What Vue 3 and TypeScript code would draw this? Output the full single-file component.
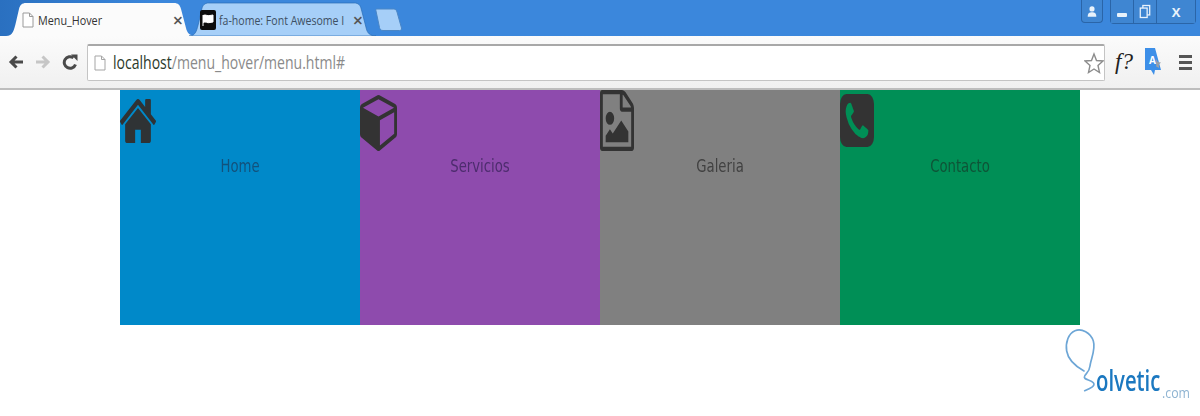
<script setup lang="ts">
interface MenuItem {
  label: string
  cls: string
  box: string
  path: string
}

const items: MenuItem[] = [
  {
    label: 'Home',
    cls: 'home',
    box: '90 253 1612 1283',
    path: 'M1472 992v480q0 26-19 45t-45 19h-384v-384h-256v384h-384q-26 0-45-19t-19-45v-480q0-1 .5-3t.5-3l575-474 575 474q1 2 1 6zm223-69l-62 74q-8 9-21 11h-3q-13 0-21-7l-692-577-692 577q-12 8-24 7-13-2-21-11l-62-74q-8-10-7-23.500t11-21.500l719-599q32-26 76-26t76 26l244 204v-195q0-14 9-23t23-9h192q14 0 23 9t9 23v408l219 182q10 8 11 21.500t-7 23.500z',
  },
  {
    label: 'Servicios',
    cls: 'servicios',
    box: '0 128 1664 1664',
    path: 'M896 1629l640-349v-636l-640 233v752zm-64-865l698-254-698-254-698 254zm832-252v768q0 35-18 65t-49 47l-704 384q-28 16-61 16t-61-16l-704-384q-31-17-49-47t-18-65v-768q0-40 23-73t61-47l704-256q22-8 44-8t44 8l704 256q38 14 61 47t23 73z',
  },
  {
    label: 'Galeria',
    cls: 'galeria',
    box: '128 0 1536 1792',
    path: 'M1596 380q28 28 48 76t20 88v1152q0 40-28 68t-68 28h-1344q-40 0-68-28t-28-68v-1600q0-40 28-68t68-28h896q40 0 88 20t76 48zm-444-244v376h376q-10-29-22-41l-313-313q-12-12-41-22zm384 1528v-1024h-416q-40 0-68-28t-28-68v-416h-768v1536h1280zm-128-448v320h-1024v-192l192-192 128 128 384-384zm-832-192q-80 0-136-56t-56-136 56-136 136-56 136 56 56 136-56 136-136 56z',
  },
  {
    label: 'Contacto',
    cls: 'contacto',
    box: '0 128 1536 1536',
    path: 'M1280 1193q0-11-2-16t-18-16.500-40.500-25-47.500-26.500-45.500-25-28.500-15q-5-3-19-13t-25-15-21-5q-15 0-36.500 20.500t-39.500 45-38.500 45-33.500 20.500q-7 0-16.500-3.500t-15.500-6.500-17-9.500-14-8.500q-99-55-170-126.500t-127-170.500q-2-3-8.500-14t-9.500-17-6.500-15.500-3.500-16.500q0-13 20.500-33.500t45-38.500 45-39.500 20.500-36.500q0-10-5-21t-15-25-13-19q-3-6-15-28.500t-25-45.500-26.500-47.500-25-40.500-16.500-18-16-2q-48 0-101 22-46 21-80 94.500t-34 130.500q0 16 2.500 34t5 30.500 9 33 10 29.500 12.500 33 11 30q60 164 216.500 320.500t320.500 216.500q6 2 30 11t33 12.500 29.500 10 33 9 30.500 5 34 2.500q57 0 130.500-34t94.500-80q22-53 22-101zm256-777v960q0 119-84.500 203.500t-203.500 84.500h-960q-119 0-203.500-84.500t-84.500-203.500v-960q0-119 84.500-203.500t203.500-84.500h960q119 0 203.500 84.500t84.500 203.500z',
  },
]
</script>

<template>
  <div class="page">
    <!-- Browser tab strip -->
    <header class="tabstrip">
      <div class="tab active">
        <svg class="tab-shape" viewBox="0 0 190 34" preserveAspectRatio="none">
          <path d="M0 34 C7 34 8 28 10 20 L13 7 C14 3 16 1 20 1 L168 1 C172 1 174 3 175 7 L180 26 C181 31 184 34 190 34 Z" fill="#fbfbfb" />
        </svg>
        <svg class="page-icon" viewBox="0 0 12 16">
          <path d="M1 1h6.500L11 4.500V15H1z M7.500 1v3.500H11" fill="#fff" stroke="#9a9a9a" stroke-width="1" />
        </svg>
        <span class="tab-title">Menu_Hover</span>
        <span class="tab-close">×</span>
      </div>
      <div class="tab inactive">
        <svg class="tab-shape" viewBox="0 0 190 34" preserveAspectRatio="none">
          <path d="M0 34 C7 34 8 28 10 20 L13 7 C14 3 16 1 20 1 L168 1 C172 1 174 3 175 7 L180 26 C181 31 184 34 190 34 Z" fill="#a6cff8" stroke="#2a6db5" stroke-width="0.7" />
        </svg>
        <span class="favicon">
          <svg viewBox="0 0 16 16">
            <path d="M3 3v11 M3 3.500c3-1.500 4 1 7 0l3-.500v7l-3 .500c-3 1-4-1.500-7 0" fill="#fff" stroke="#fff" stroke-width="1" />
          </svg>
        </span>
        <span class="tab-title muted">fa-home: Font Awesome I</span>
        <span class="tab-close">×</span>
      </div>
      <svg class="new-tab" viewBox="0 0 28 23">
        <path d="M1.500 1h17c2 0 3 1 3.500 3l4.500 16c.4 1.500-.5 2.500-2 2.500H8c-2 0-3-1-3.500-3L1 3c-.3-1 0-2 .5-2z" fill="#a6cff8" stroke="#4a86c6" />
      </svg>
      <div class="window-controls">
        <div class="win-btn user">
          <svg viewBox="0 0 14 14" width="12" height="13">
            <circle cx="7" cy="4" r="3" fill="#e8f2fb" />
            <path d="M2 13c0-4 2-5 5-5s5 1 5 5z" fill="#e8f2fb" />
          </svg>
        </div>
        <div class="win-group">
          <div class="win-btn min"><span class="min-bar"></span></div>
          <div class="win-btn restore">
            <svg viewBox="0 0 14 16" width="12" height="15">
              <rect x="4.500" y="1" width="8" height="11" fill="none" stroke="#e8f2fb" stroke-width="1.500" />
              <rect x="1.500" y="4" width="8" height="11" fill="#3f86d2" stroke="#e8f2fb" stroke-width="1.500" />
            </svg>
          </div>
          <div class="win-btn close">X</div>
        </div>
      </div>
    </header>

    <!-- Browser toolbar -->
    <nav class="toolbar">
      <svg class="nav-icon" viewBox="0 0 16 16">
        <path d="M15 8H3 M8.500 2.500L3 8l5.500 5.500" fill="none" stroke="#4a4a4a" stroke-width="3" />
      </svg>
      <svg class="nav-icon" viewBox="0 0 16 16">
        <path d="M1 8H13 M7.500 2.500L13 8l-5.500 5.500" fill="none" stroke="#c6c6c6" stroke-width="3" />
      </svg>
      <svg class="nav-icon reload" viewBox="0 0 16 16">
        <path d="M13.500 10.500A5.800 5.800 0 1 1 11.500 3.800" fill="none" stroke="#4a4a4a" stroke-width="3" />
        <path d="M9 0.500h6.500V7z" fill="#4a4a4a" />
      </svg>
      <div class="omnibox">
        <svg class="page-icon" viewBox="0 0 12 16">
          <path d="M1 1h6.500L11 4.500V15H1z M7.500 1v3.500H11" fill="#fff" stroke="#a5a5a5" stroke-width="1" />
        </svg>
        <span class="url"><span class="host">localhost</span>/menu_hover/menu.html#</span>
        <svg class="star" viewBox="0 0 20 22">
          <path d="M10 2l2.500 6.500 6.500.500-5 4.500 1.500 7-5.500-3.500-5.500 3.500 1.500-7-5-4.500 6.500-.500z" fill="#fff" stroke="#8c8c8c" stroke-width="1.400" />
        </svg>
      </div>
      <span class="ext-f">f?</span>
      <svg class="translate" viewBox="0 0 20 30">
        <path d="M1 1h10l6 22h-6l-1 5-3-5H1z" fill="#3d8fe8" />
        <path d="M12 12l1.800 3 3.200.500-2.300 2.300.500 3.200-3-1.500z" fill="#9aa0a8" />
      </svg>
      <span class="translate-a">A</span>
      <div class="chrome-menu"><span></span><span></span><span></span></div>
    </nav>

    <!-- Page content -->
    <main class="menu">
      <a v-for="item in items" :key="item.label" href="#" class="tile" :class="item.cls">
        <span class="icon-box">
          <svg class="tile-icon" :viewBox="item.box" preserveAspectRatio="none">
            <path :d="item.path" />
          </svg>
        </span>
        <span class="label">{{ item.label }}</span>
      </a>
    </main>

    <footer class="watermark">
      <div class="logo">
        <svg class="logo-bulb" viewBox="0 27 480 273">
          <path d="M134 224C150 218 168 210 160 200C152 190 128 192 134 180C138 172 148 168 150 150C152 130 168 100 160 75C152 50 125 36 105 44C85 52 76 80 80 105C84 130 105 150 132 165" fill="none" stroke="#6da6d6" stroke-width="5" stroke-linecap="round" />
        </svg>
        <span class="logo-name">olvetic</span>
        <span class="logo-com">.com</span>
      </div>
    </footer>
  </div>
</template>

<style>
html,
body {
  margin: 0;
  background: #fff;
}
</style>

<style scoped>
.page {
  width: 1200px;
  height: 416px;
  overflow: hidden;
  display: flex;
  flex-direction: column;
  font-family: "Open Sans", "Liberation Sans", sans-serif;
  filter: blur(0.4px);
}

.tabstrip {
  height: 36px;
  flex: none;
  display: flex;
  align-items: flex-end;
  padding-left: 6px;
  box-sizing: border-box;
  background: linear-gradient(90deg, #2a70c0 0, #3b87dc 160px, #3b87dc 100%);
}

.tab {
  position: relative;
  width: 190px;
  height: 34px;
  margin-right: -7px;
  display: flex;
  align-items: center;
  box-sizing: border-box;
  padding: 2px 11px 0 16px;
}

.tab.inactive {
  width: 187px;
  margin-right: 0;
  padding-left: 11px;
}

.tab-shape {
  position: absolute;
  inset: 0;
  width: 100%;
  height: 100%;
}

.tab > :not(.tab-shape) {
  position: relative;
}

.page-icon {
  width: 12px;
  height: 16px;
  flex: none;
}

.tab-title {
  flex: 1;
  min-width: 0;
  margin-left: 4px;
  font-size: 12px;
  color: #333;
  white-space: nowrap;
  transform: scaleX(0.9);
  transform-origin: left;
}

.tab-title.muted {
  color: #3d4f63;
  margin-left: 3px;
  transform: scaleX(0.88);
}

.tab-close {
  width: 14px;
  text-align: center;
  font-size: 18px;
  font-weight: 600;
  color: #555;
  line-height: 1;
}

.favicon {
  width: 16px;
  height: 20px;
  flex: none;
  border-radius: 2px;
  background: #0c0c0c;
  display: flex;
  align-items: center;
}

.favicon svg {
  width: 16px;
  height: 16px;
}

.new-tab {
  width: 28px;
  height: 23px;
  margin: 0 0 5px -1px;
  flex: none;
}

.window-controls {
  margin-left: auto;
  align-self: flex-start;
  display: flex;
  gap: 7px;
  margin-right: 4px;
}

.win-group {
  display: flex;
  border: 1px solid #2a65a8;
  border-top: none;
  border-radius: 0 0 4px 4px;
}

.win-btn {
  height: 23px;
  box-sizing: border-box;
  display: flex;
  align-items: center;
  justify-content: center;
  background: #3f86d2;
  color: #e8f2fb;
}

.win-btn.user {
  width: 22px;
  border: 1px solid #2a65a8;
  border-top: none;
  border-radius: 0 0 4px 4px;
}

.win-btn.min,
.win-btn.restore {
  width: 23px;
  border-right: 1px solid #2a65a8;
}

.min-bar {
  width: 10px;
  height: 4px;
  margin-top: 6px;
  border-radius: 1px;
  background: #e8f2fb;
}

.win-btn.close {
  width: 38px;
  font-size: 13px;
  font-weight: 700;
}

.toolbar {
  height: 54px;
  flex: none;
  display: flex;
  align-items: center;
  box-sizing: border-box;
  padding: 0 8px 0 8px;
  background: linear-gradient(#fbfbfb, #f0f0f0);
  border-bottom: 2px solid #bdbdbd;
}

.nav-icon {
  width: 16px;
  height: 16px;
  flex: none;
  margin-right: 11px;
}

.nav-icon.reload {
  margin-right: 9px;
}

.omnibox {
  flex: none;
  width: 1018px;
  height: 37px;
  display: flex;
  align-items: center;
  box-sizing: border-box;
  padding: 0 0 0 6px;
  background: #fff;
  border: 1px solid #c4c4c4;
  border-top: 2px solid #a8a8a8;
  border-radius: 2px;
}

.url {
  margin-left: 7px;
  font-size: 18px;
  margin-top: -2px;
  color: #8a8a8a;
  white-space: nowrap;
  transform: scaleX(0.78);
  transform-origin: left;
}

.host {
  color: #2c3a2c;
}

.star {
  width: 20px;
  height: 22px;
  margin-left: auto;
}

.ext-f {
  margin-left: 10px;
  width: 22px;
  font-family: "Liberation Serif", serif;
  font-style: italic;
  font-size: 23px;
  color: #222;
}

.translate {
  width: 20px;
  height: 30px;
  margin-left: 7px;
  flex: none;
}

.translate-a {
  width: 0;
  font-size: 10px;
  font-weight: 700;
  color: #fff;
  transform: translate(-15px, -2px);
}

.chrome-menu {
  margin-left: 15px;
  width: 13px;
  display: flex;
  flex-direction: column;
  gap: 3px;
}

.chrome-menu span {
  height: 3px;
  background: #555;
}

.menu {
  width: 960px;
  height: 235px;
  flex: none;
  margin: 0 auto;
  display: grid;
  grid-template-columns: repeat(4, 1fr);
}

.tile {
  display: flex;
  flex-direction: column;
  text-decoration: none;
}

.home {
  background: #0089c9;
  color: #12527c;
}

.servicios {
  background: #8e4bad;
  color: #4d2c6e;
}

.galeria {
  background: #808080;
  color: #414141;
}

.contacto {
  background: #008f56;
  color: #0e5437;
}

.icon-box {
  height: 66px;
  flex: none;
  display: block;
}

.tile-icon {
  display: block;
  fill: #333;
}

.home .tile-icon {
  width: 36px;
  height: 44px;
  margin-top: 9px;
  fill: #2f3335;
}

.servicios .tile-icon {
  width: 37px;
  height: 56px;
  margin-top: 5px;
}

.galeria .tile-icon {
  width: 34px;
  height: 61px;
}

.contacto .tile-icon {
  width: 34px;
  height: 53px;
  margin-top: 4px;
}

.label {
  text-align: center;
  font-family: "DejaVu Sans", sans-serif;
  font-size: 17px;
  line-height: 21px;
  transform: scaleX(0.78);
}

.watermark {
  flex: 1;
  display: flex;
  justify-content: flex-end;
}

.logo {
  position: relative;
  width: 160px;
  height: 91px;
}

.logo-bulb {
  display: block;
  width: 160px;
  height: 91px;
}

.logo-name {
  position: absolute;
  left: 56px;
  top: 39px;
  font-family: "Open Sans", sans-serif;
  font-weight: 600;
  font-size: 29px;
  line-height: 32px;
  color: #1b78c0;
  transform: scaleX(0.7);
  transform-origin: left;
}

.logo-com {
  position: absolute;
  left: 122px;
  top: 60px;
  font-size: 14px;
  line-height: 16px;
  color: #8fb4d2;
  transform: scaleX(0.88);
  transform-origin: left;
}
</style>
